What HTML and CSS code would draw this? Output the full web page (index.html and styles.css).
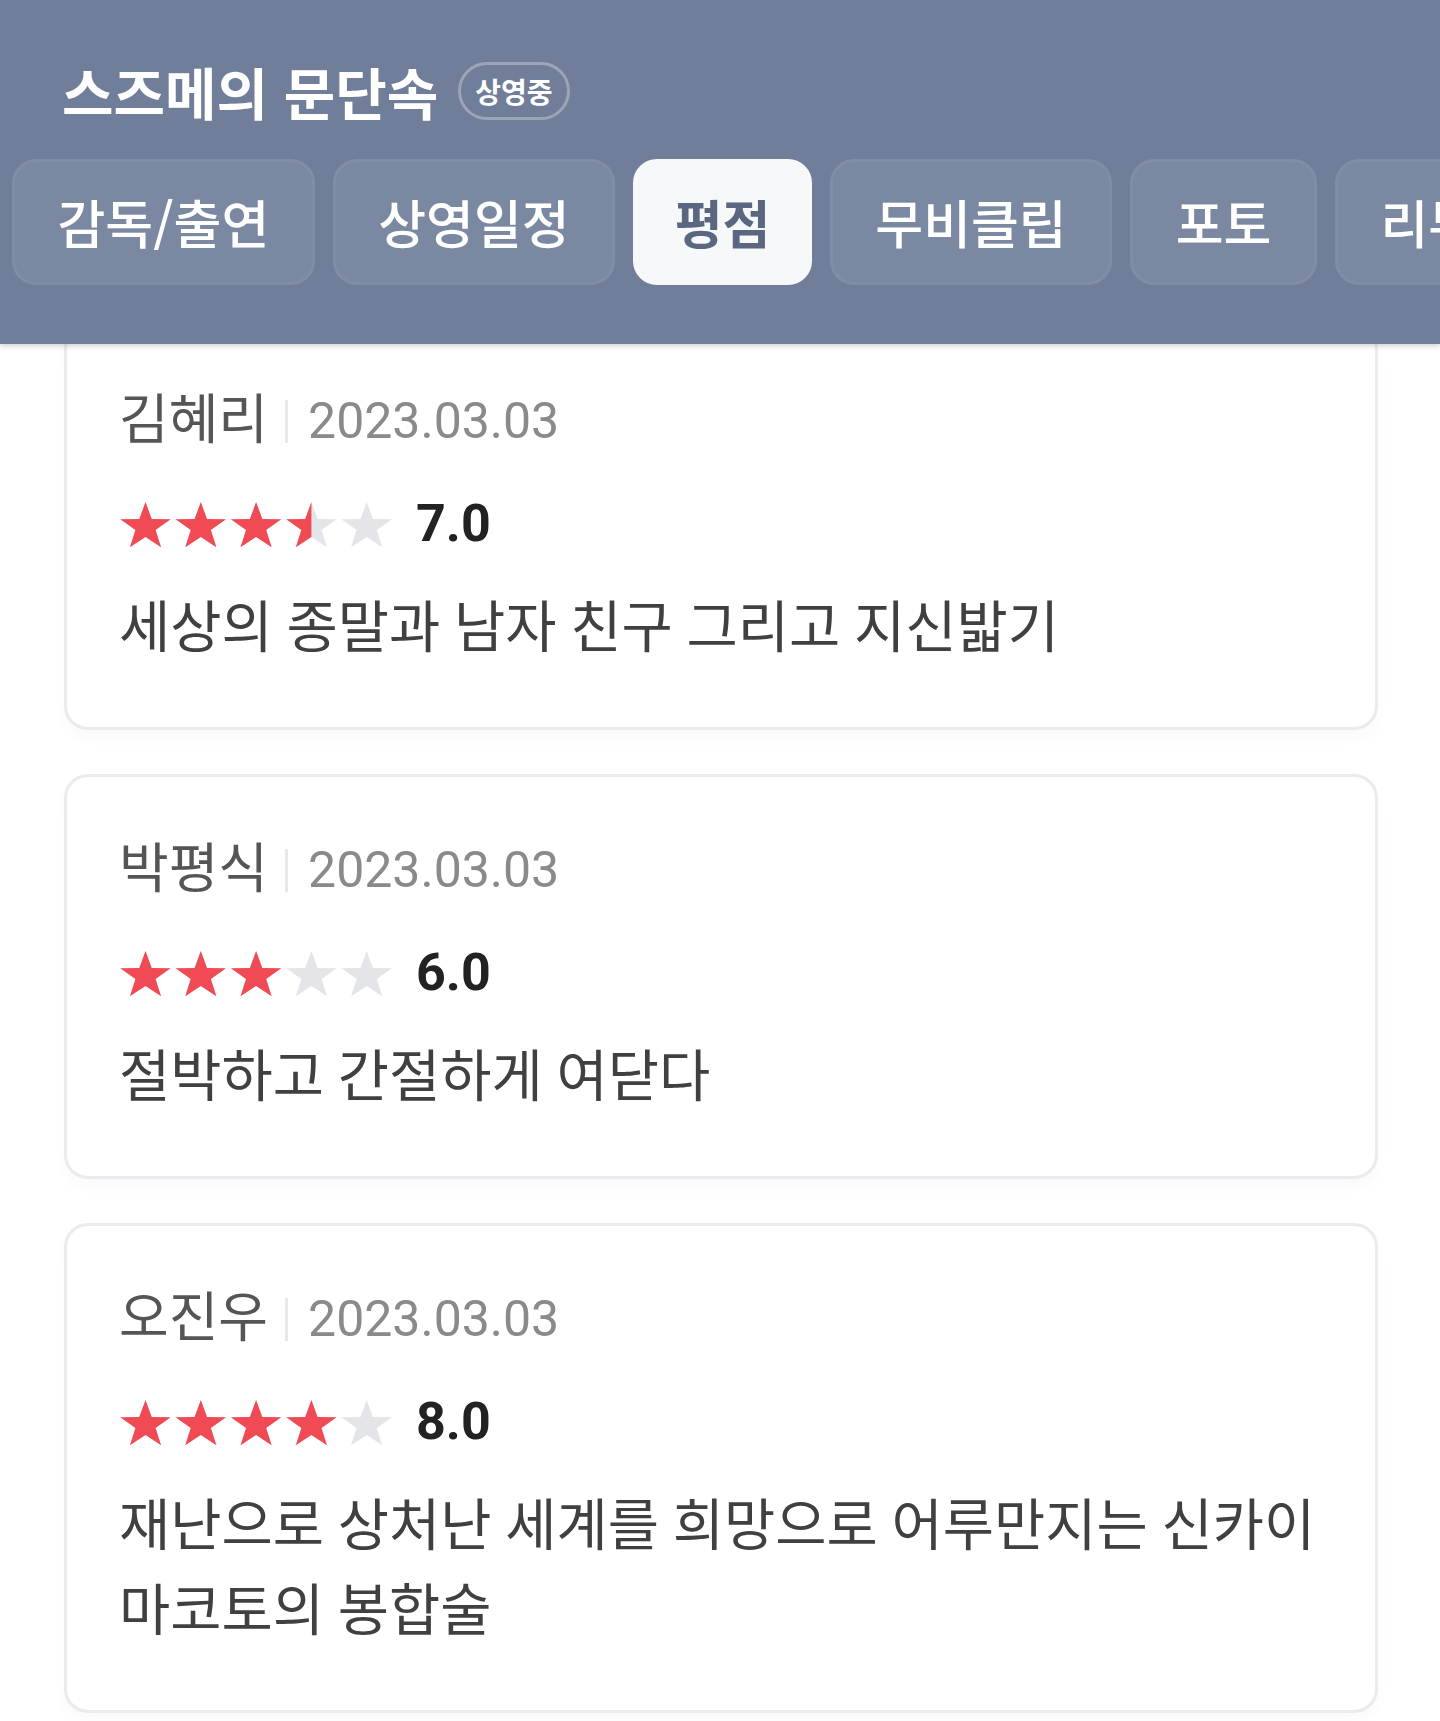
FILE: index.html
```html
<!DOCTYPE html>
<html lang="ko">
<head>
<meta charset="utf-8">
<title>스즈메의 문단속 - 평점</title>
<link rel="stylesheet" href="styles.css">
</head>
<body>
<svg class="defs" width="0" height="0" aria-hidden="true">
  <defs>
    <path id="star" d="M0 -24.91L6.23 -8.07L25.2 -7.7L10.08 3.08L15.58 20.15L0 9.96L-15.58 20.15L-10.08 3.08L-25.2 -7.7L-6.23 -8.07Z"/>
    <g id="row">
      <use href="#star" x="26.5" y="26"/>
      <use href="#star" x="81.8" y="26"/>
      <use href="#star" x="137.1" y="26"/>
      <use href="#star" x="192.4" y="26"/>
      <use href="#star" x="247.7" y="26"/>
    </g>
  </defs>
</svg>

<header class="top">
  <div class="title-row">
    <h1 class="title">스즈메의 문단속</h1>
    <span class="badge">상영중</span>
  </div>
  <nav class="tabs">
    <a class="tab">감독/출연</a>
    <a class="tab">상영일정</a>
    <a class="tab active">평점</a>
    <a class="tab">무비클립</a>
    <a class="tab">포토</a>
    <a class="tab">리뷰</a>
  </nav>
</header>

<main class="list">
  <article class="card">
    <div class="meta"><span class="name">김혜리</span><span class="sep"></span><span class="date">2023.03.03</span></div>
    <div class="rating">
      <svg class="stars" viewBox="0 0 276 47">
        <defs><clipPath id="c1"><rect x="0" y="0" width="192.4" height="47"/></clipPath></defs>
        <use href="#row" class="off"/>
        <use href="#row" class="on" clip-path="url(#c1)"/>
      </svg>
      <span class="score">7.0</span>
    </div>
    <p class="text">세상의 종말과 남자 친구 그리고 지신밟기</p>
  </article>

  <article class="card">
    <div class="meta"><span class="name">박평식</span><span class="sep"></span><span class="date">2023.03.03</span></div>
    <div class="rating">
      <svg class="stars" viewBox="0 0 276 47">
        <defs><clipPath id="c2"><rect x="0" y="0" width="164.75" height="47"/></clipPath></defs>
        <use href="#row" class="off"/>
        <use href="#row" class="on" clip-path="url(#c2)"/>
      </svg>
      <span class="score">6.0</span>
    </div>
    <p class="text">절박하고 간절하게 여닫다</p>
  </article>

  <article class="card">
    <div class="meta"><span class="name">오진우</span><span class="sep"></span><span class="date">2023.03.03</span></div>
    <div class="rating">
      <svg class="stars" viewBox="0 0 276 47">
        <defs><clipPath id="c3"><rect x="0" y="0" width="220" height="47"/></clipPath></defs>
        <use href="#row" class="off"/>
        <use href="#row" class="on" clip-path="url(#c3)"/>
      </svg>
      <span class="score">8.0</span>
    </div>
    <p class="text">재난으로 상처난 세계를 희망으로 어루만지는 신카이 마코토의 봉합술</p>
  </article>
</main>
</body>
</html>
```

FILE: styles.css
```css
* {
  box-sizing: border-box;
}

html, body {
  margin: 0;
  padding: 0;
  background: #ffffff;
}

body {
  font-family: Roboto, "Noto Sans CJK KR", sans-serif;
  overflow: hidden;
  word-break: keep-all;
}

.defs {
  position: absolute;
  width: 0;
  height: 0;
}

/* ---------- header ---------- */
.top {
  position: sticky;
  top: 0;
  z-index: 2;
  height: 344px;
  background: #717e99;
  padding: 55px 0 0 12px;
  box-shadow: 0 2px 5px rgba(40, 50, 70, 0.22);
  overflow: hidden;
}

.title-row {
  display: flex;
  align-items: center;
  height: 72px;
  padding-left: 50px;
  gap: 20px;
}

.title {
  margin: 0;
  font-family: "Noto Sans CJK KR", sans-serif;
  font-weight: 700;
  font-size: 56px;
  line-height: 72px;
  color: #ffffff;
  white-space: nowrap;
}

.badge {
  display: flex;
  align-items: center;
  height: 58px;
  padding: 0 14px;
  border: 3px solid rgba(255, 255, 255, 0.3);
  border-radius: 29px;
  font-family: "Noto Sans CJK KR", sans-serif;
  font-weight: 700;
  font-size: 28px;
  color: #ffffff;
}

.tabs {
  display: flex;
  gap: 18px;
  margin-top: 32px;
}

.tab {
  flex-shrink: 0;
  display: flex;
  align-items: center;
  height: 126px;
  padding: 0 42.5px;
  border: 3px solid #808da6;
  border-radius: 24px;
  background: #7b88a2;
  font-family: "Noto Sans CJK KR", sans-serif;
  font-weight: 500;
  font-size: 52px;
  line-height: 1;
  color: #ffffff;
  white-space: nowrap;
}

.tab.active {
  padding: 0 38.5px;
  background: #f7f8fa;
  border-color: #f7f8fa;
  color: #5b6781;
  font-weight: 700;
}

/* ---------- list ---------- */
.list {
  display: flex;
  flex-direction: column;
  gap: 44px;
  margin-top: -19px;
  padding: 0 62px 40px 64px;
}

.card {
  background: #ffffff;
  border: 3px solid #e9ebef;
  border-radius: 24px;
  padding: 63px 30px 56px 52px;
  box-shadow: 0 8px 16px rgba(0, 0, 0, 0.025);
}

.meta {
  display: flex;
  align-items: center;
  height: 60px;
}

.name {
  font-size: 54px;
  line-height: 60px;
  color: #555555;
}

.sep {
  width: 3px;
  height: 43px;
  margin: 0 20px 0 17px;
  background: #e6e8ec;
}

.date {
  font-size: 50px;
  line-height: 60px;
  color: #8a8a8a;
}

.rating {
  display: flex;
  align-items: center;
  height: 60px;
  margin-top: 43px;
}

.stars {
  display: block;
  width: 276px;
  height: 47px;
}

.stars .off {
  fill: #e3e5e9;
}

.stars .on {
  fill: #f04b55;
}

.score {
  margin-left: 21px;
  font-family: Roboto, sans-serif;
  font-weight: 700;
  font-size: 52px;
  line-height: 60px;
  color: #222222;
}

.text {
  margin: 32px 0 0;
  font-size: 55.7px;
  line-height: 85px;
  color: #404040;
}
```
